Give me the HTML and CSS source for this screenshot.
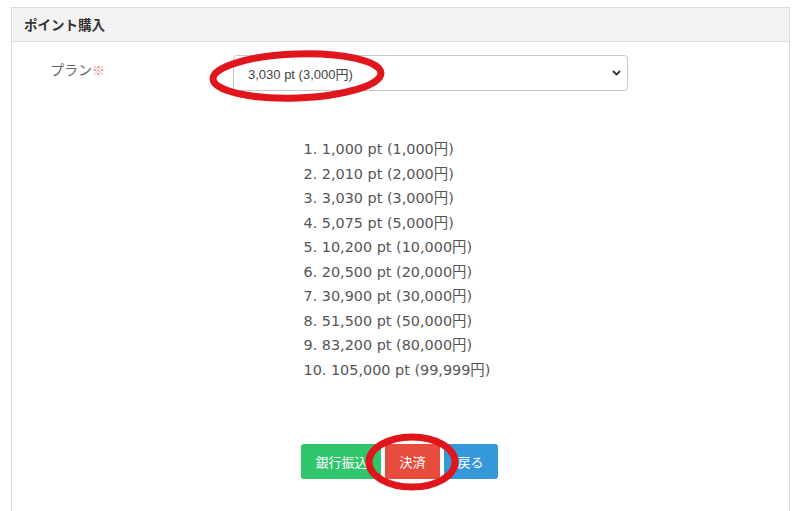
FILE: index.html
```html
<!DOCTYPE html>
<html lang="ja">
<head>
<meta charset="utf-8">
<link rel="stylesheet" href="styles.css">
</head>
<body>
<div class="panel">
  <div class="panel-head">ポイント購入</div>
  <div class="panel-body">
    <div class="form-row">
      <label class="form-label">プラン<span class="req">※</span></label>
      <div class="select">
        <span class="select-text">3,030 pt (3,000円)</span>
        <svg class="chev" width="9" height="6" viewBox="0 0 9 6"><path d="M1 1 L4.5 4.5 L8 1" fill="none" stroke="#333" stroke-width="1.8"/></svg>
      </div>
    </div>
    <div class="plans">
      <ol class="plan-list">
        <li>1,000 pt (1,000円)</li>
        <li>2,010 pt (2,000円)</li>
        <li>3,030 pt (3,000円)</li>
        <li>5,075 pt (5,000円)</li>
        <li>10,200 pt (10,000円)</li>
        <li>20,500 pt (20,000円)</li>
        <li>30,900 pt (30,000円)</li>
        <li>51,500 pt (50,000円)</li>
        <li>83,200 pt (80,000円)</li>
        <li>105,000 pt (99,999円)</li>
      </ol>
    </div>
    <div class="actions">
      <button class="btn btn-green">銀行振込</button>
      <button class="btn btn-red">決済</button>
      <button class="btn btn-blue">戻る</button>
    </div>
  </div>
</div>
<svg class="marks" width="800" height="511" viewBox="0 0 800 511">
  <ellipse cx="297" cy="76" rx="84" ry="22" fill="none" stroke="#e0161c" stroke-width="7" transform="rotate(-2 297 76)"/>
  <ellipse cx="412" cy="462" rx="43" ry="25" fill="none" stroke="#e0161c" stroke-width="7"/>
</svg>
</body>
</html>
```
FILE: styles.css
```css
html, body {
  margin: 0;
  padding: 0;
  background: #fff;
}
body {
  position: relative;
  padding: 7px 10px 0 11px;
  height: 504px;
  overflow: hidden;
  font-family: "Noto Sans CJK JP", "Liberation Sans", sans-serif;
  color: #333;
}
.panel {
  border: 1px solid #dcdcdc;
  border-bottom: none;
  height: 520px;
}
.panel-head {
  height: 33px;
  line-height: 32px;
  padding-left: 12px;
  background: #f2f2f2;
  border-bottom: 1px solid #dcdcdc;
  font-size: 13.5px;
  font-weight: bold;
  color: #333;
}
.panel-body {
  padding-top: 13px;
}
.form-row {
  display: flex;
  align-items: flex-start;
}
.form-label {
  width: 183px;
  padding-left: 38px;
  padding-top: 4px;
  font-size: 14px;
  color: #666;
}
.req {
  color: #ec8a7a;
  font-size: 13px;
}
.select {
  width: 395px;
  height: 36px;
  box-sizing: border-box;
  border: 1px solid #c8c8c8;
  border-radius: 4px;
  display: flex;
  align-items: center;
  justify-content: space-between;
  padding: 0 6px 0 14px;
}
.select-text {
  font-family: "Liberation Sans", "Noto Sans CJK JP", sans-serif;
  font-size: 13px;
  color: #444;
}
.chev {
  display: block;
}
.plans {
  display: flex;
  justify-content: center;
  margin-top: 46px;
  padding-right: 2px;
}
.plan-list {
  margin: 0;
  padding: 0;
  list-style: decimal inside;
  font-family: "DejaVu Sans", "Noto Sans CJK JP", sans-serif;
  font-size: 14.4px;
  line-height: 24.5px;
  color: #555;
  width: 192px;
}
.actions {
  display: flex;
  justify-content: center;
  gap: 4px;
  margin-top: 62px;
  padding-right: 2px;
}
.btn {
  height: 35px;
  border: none;
  border-radius: 3px;
  padding: 0 14px;
  font-family: "Noto Sans CJK JP", sans-serif;
  font-size: 13px;
  color: #fff;
}
.btn-green { background: #2fc56b; }
.btn-red { background: #e74c3c; }
.btn-blue { background: #3498db; }
.marks {
  position: absolute;
  left: 0;
  top: 0;
  pointer-events: none;
}
```
